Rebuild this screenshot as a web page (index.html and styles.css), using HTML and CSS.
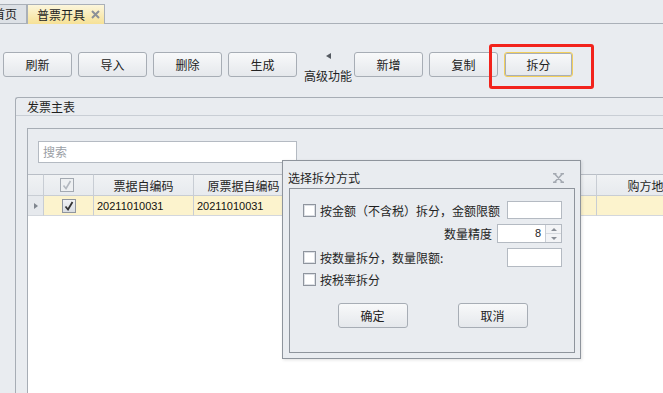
FILE: index.html
```html
<!DOCTYPE html>
<html lang="zh-CN">
<head>
    <meta charset="UTF-8">
    <title>普票开具</title>
    <link rel="stylesheet" href="styles.css">
</head>
<body>
    <div class="tabbar">
        <div class="tab tab-home">首页</div>
        <div class="tab tab-active">普票开具<svg class="tab-close" width="9" height="9" viewBox="0 0 9 9"><path d="M1 1L8 8M8 1L1 8" stroke="#8b9098" stroke-width="2"/></svg></div>
        <div class="tab-rest"></div>
    </div>

    <div class="toolbar">
        <button class="btn">刷新</button>
        <button class="btn">导入</button>
        <button class="btn">删除</button>
        <button class="btn">生成</button>
        <div class="more">
            <span class="more-arrow"></span>
            <span class="more-label">高级功能</span>
        </div>
        <button class="btn">新增</button>
        <button class="btn">复制</button>
        <button class="btn btn-focus">拆分</button>
        <div class="highlight"></div>
    </div>

    <div class="group">
        <div class="group-title">发票主表</div>
        <div class="panel">
            <div class="panel-top">
                <div class="search">搜索</div>
            </div>
            <div class="grid">
                <div class="grid-row grid-head">
                    <div class="cell"></div>
                    <div class="cell cell-center"><span class="chk chk-head"><svg width="10" height="10" viewBox="0 0 10 10"><path d="M1.5 5.5L4 8.5L8.5 1" fill="none" stroke="#b4b9c0" stroke-width="1.6"/></svg></span></div>
                    <div class="cell cell-center">票据自编码</div>
                    <div class="cell cell-center">原票据自编码</div>
                    <div class="cell"></div>
                    <div class="cell cell-center">购方地址</div>
                </div>
                <div class="grid-row grid-sel">
                    <div class="cell cell-ind"><span class="ind-arrow"></span></div>
                    <div class="cell cell-center"><span class="chk chk-row"><svg width="10" height="10" viewBox="0 0 10 10"><path d="M1.5 5.5L4 8.5L8.5 1" fill="none" stroke="#333" stroke-width="1.8"/></svg></span></div>
                    <div class="cell num">20211010031</div>
                    <div class="cell num">20211010031</div>
                    <div class="cell"></div>
                    <div class="cell"></div>
                </div>
            </div>
        </div>
    </div>

    <div class="dialog">
        <div class="dialog-title">
            <span>选择拆分方式</span>
            <svg class="dialog-close" width="11" height="10" viewBox="0 0 11 10">
                <path d="M0 0.75H3.5M7.5 0.75H11M0 9.25H3.5M7.5 9.25H11M1.5 0.75L9.5 9.25M9.5 0.75L1.5 9.25" fill="none" stroke="#a4a9b1" stroke-width="1.5"/>
            </svg>
        </div>
        <div class="dialog-body">
            <div class="opt opt-first">
                <span class="box"></span>
                <span class="opt-label">按金额（不含税）拆分，金额限额</span>
                <span class="field"></span>
            </div>
            <div class="opt opt-spin">
                <span class="opt-label">数量精度</span>
                <span class="spin">
                    <span class="spin-value">8</span>
                    <span class="spin-btns">
                        <span class="spin-up"></span>
                        <span class="spin-down"></span>
                    </span>
                </span>
            </div>
            <div class="opt opt-qty">
                <span class="box"></span>
                <span class="opt-label">按数量拆分，数量限额:</span>
                <span class="field"></span>
            </div>
            <div class="opt opt-rate">
                <span class="box"></span>
                <span class="opt-label">按税率拆分</span>
            </div>
            <div class="dialog-actions">
                <button class="btn btn-dlg">确定</button>
                <button class="btn btn-dlg">取消</button>
            </div>
        </div>
    </div>
</body>
</html>
```

FILE: styles.css
```css
/* Fenêtre principale */
* {
    box-sizing: border-box;
}

body {
    margin: 0;
    width: 663px;
    height: 393px;
    overflow: hidden;
    position: relative;
    background-color: #e9ecf0;
    font-family: "Noto Sans CJK SC", "Liberation Sans", sans-serif;
    font-size: 12px;
    color: #1f1f1f;
}

/* Onglets */
.tabbar {
    display: flex;
    align-items: flex-end;
    height: 24px;
}

.tab {
    height: 20px;
    line-height: 18px;
    border: 1px solid #aab0b8;
    border-bottom: none;
    white-space: nowrap;
}

.tab-home {
    margin-left: -18px;
    padding: 0 9px 0 10px;
    background-color: #dde1e6;
    border-bottom: 1px solid #aab0b8;
}

.tab-active {
    display: flex;
    align-items: center;
    padding: 0 4px 0 9px;
    background: linear-gradient(#fcf6dc, #f6e196);
}

.tab-close {
    margin-left: 6px;
}

.tab-rest {
    flex: 1;
    height: 24px;
    border-bottom: 1px solid #aab0b8;
}

/* Barre d'outils */
.toolbar {
    position: relative;
    display: flex;
    align-items: flex-start;
    height: 73px;
    padding: 28px 0 0 3px;
}

.btn {
    width: 69px;
    height: 25px;
    margin-right: 6px;
    padding: 0;
    border: 1px solid #a7adb5;
    border-radius: 3px;
    background: linear-gradient(#f8f9fa, #e5e8ec);
    font-family: inherit;
    font-size: 12px;
    color: #222;
}

.btn-focus {
    border-color: #f2cf5c;
    box-shadow: inset 0 0 0 1px #a9aeb6;
}

.more {
    display: flex;
    flex-direction: column;
    align-items: center;
    width: 57px;
    padding-left: 5px;
    margin-left: -6px;
}

.more-arrow {
    margin-top: 1px;
    width: 0;
    height: 0;
    border-top: 3px solid transparent;
    border-bottom: 3px solid transparent;
    border-right: 5px solid #555a61;
}

.more-label {
    margin-top: 10px;
    line-height: 14px;
    white-space: nowrap;
}

.highlight {
    position: absolute;
    left: 489px;
    top: 20px;
    width: 105px;
    height: 45px;
    border: 3px solid #f2231c;
    border-radius: 3px;
}

/* Cadre "发票主表" */
.group {
    height: 296px;
    margin-left: 15px;
    border-top: 1px solid #a7adb5;
    border-left: 1px solid #a7adb5;
    border-top-left-radius: 3px;
    display: flex;
    flex-direction: column;
}

.group-title {
    height: 18px;
    padding-left: 11px;
    line-height: 17px;
    border-bottom: 1px solid #c9ced5;
}

.panel {
    flex: 1;
    margin: 12px 0 0 11px;
    border-top: 1px solid #a7adb5;
    border-left: 1px solid #a7adb5;
    display: flex;
    flex-direction: column;
}

.panel-top {
    height: 45px;
    padding: 12px 0 0 10px;
}

.search {
    width: 259px;
    height: 22px;
    padding-left: 4px;
    line-height: 20px;
    border: 1px solid #b4bac2;
    background-color: #fff;
    color: #9a9ea5;
}

/* Grille */
.grid {
    flex: 1;
    background-color: #fff;
}

.grid-row {
    display: grid;
    grid-template-columns: 16px 50px 100px 100px 303px 110px;
}

.cell {
    display: flex;
    align-items: center;
    border-right: 1px solid #c8cdd4;
    border-bottom: 1px solid #c8cdd4;
    white-space: nowrap;
    overflow: hidden;
}

.cell-center {
    justify-content: center;
}

.grid-head {
    height: 22px;
}

.grid-head .cell {
    border-top: 1px solid #b9bec6;
    background: linear-gradient(#f0f2f4, #e7eaee);
}

.grid-sel {
    height: 20px;
}

.grid-sel .cell {
    background-color: #fcf3cd;
    border-bottom-color: #d3d7dd;
}

.grid-sel .cell-ind {
    background-color: #e6e9ed;
    padding-left: 6px;
}

.ind-arrow {
    width: 0;
    height: 0;
    border-top: 3px solid transparent;
    border-bottom: 3px solid transparent;
    border-left: 4px solid #80868f;
}

.num {
    padding-left: 3px;
    font-family: "Liberation Sans", sans-serif;
    font-size: 11px;
    color: #111;
}

.chk {
    display: flex;
    align-items: center;
    justify-content: center;
    width: 14px;
    height: 14px;
    border: 1px solid #a3a9b1;
}

.chk-head {
    background-color: #eef0f2;
    margin-right: 4px;
}

.chk-row {
    background: linear-gradient(#f1f2f4, #d9dde2);
    border-color: #8f959e;
}

/* Boîte de dialogue */
.dialog {
    position: absolute;
    left: 282px;
    top: 160px;
    width: 299px;
    height: 199px;
    border: 1px solid #8e949c;
    background-color: #e9ecf0;
    box-shadow: 1px 1px 3px rgba(0, 0, 0, 0.12);
}

.dialog-title {
    display: flex;
    justify-content: space-between;
    height: 27px;
    padding: 8px 16px 0 5px;
    line-height: 17px;
}

.dialog-close {
    margin-top: 4px;
}

.dialog-body {
    height: 165px;
    margin: 0 5px 0 6px;
    padding: 0 12px 0 13px;
    border: 1px solid #8e949c;
}

.opt {
    display: flex;
    align-items: center;
}

.opt-first {
    margin-top: 12px;
    height: 18px;
}

.opt-spin {
    justify-content: flex-end;
    margin-top: 5px;
    height: 19px;
}

.opt-spin .opt-label {
    margin-right: 5px;
}

.opt-qty {
    margin-top: 5px;
    height: 19px;
}

.opt-rate {
    margin-top: 4px;
    height: 16px;
}

.box {
    width: 13px;
    height: 13px;
    margin-right: 4px;
    border: 1px solid #8f959e;
    background-color: #fff;
    box-shadow: inset 0 0 0 1px #dde0e5;
}

.opt-label {
    white-space: nowrap;
}

.field {
    margin-left: auto;
    width: 55px;
    height: 100%;
    border: 1px solid #b4bac2;
    background-color: #fff;
}

.spin {
    display: flex;
    width: 65px;
    height: 19px;
    border: 1px solid #b4bac2;
    background-color: #fff;
}

.spin-value {
    flex: 1;
    text-align: right;
    padding-right: 4px;
    line-height: 17px;
    font-family: "Liberation Sans", sans-serif;
    font-size: 11px;
}

.spin-btns {
    display: flex;
    flex-direction: column;
    width: 16px;
    border-left: 1px solid #c9ced5;
    background-color: #f3f4f6;
}

.spin-up, .spin-down {
    flex: 1;
    display: flex;
    align-items: center;
    justify-content: center;
}

.spin-up {
    border-bottom: 1px solid #d5d9de;
}

.spin-up::after, .spin-down::after {
    content: "";
    width: 0;
    height: 0;
    border-left: 3px solid transparent;
    border-right: 3px solid transparent;
}

.spin-up::after {
    border-bottom: 3px solid #8b9098;
}

.spin-down::after {
    border-top: 3px solid #8b9098;
}

.dialog-actions {
    display: flex;
    justify-content: center;
    gap: 50px;
    margin-top: 16px;
}

.btn-dlg {
    width: 70px;
    margin-right: 0;
}
```
